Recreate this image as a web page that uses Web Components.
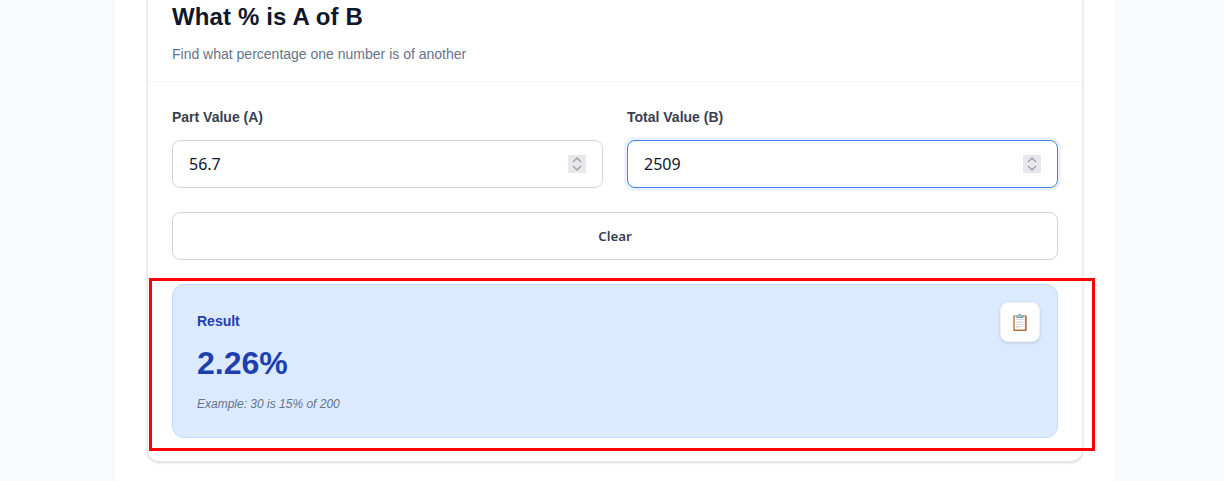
<!DOCTYPE html>
<html lang="en"><head><meta charset="utf-8"><title>What % is A of B</title>
<style>
html,body{margin:0;height:481px;overflow:hidden;background:#f8fafc;font-family:"Liberation Sans",Arial,sans-serif}
</style></head><body>
<x-page>
  <x-card>
    <x-card-header slot="header" heading="What % is A of B" sub="Find what percentage one number is of another"></x-card-header>
    <x-field-row>
      <x-field label="Part Value (A)" value="56.7"></x-field>
      <x-field label="Total Value (B)" value="2509" focused></x-field>
    </x-field-row>
    <x-clear-button>Clear</x-clear-button>
    <x-result value="2.26%" example="Example: 30 is 15% of 200"></x-result>
  </x-card>
  <x-highlight></x-highlight>
</x-page>
<script>
function def(name,html,init){customElements.define(name,class extends HTMLElement{
  constructor(){super();this.attachShadow({mode:'open'}).innerHTML=html;}
  connectedCallback(){if(init)init(this,this.shadowRoot);}
});}
def('x-page',`<style>
:host{display:block;position:relative;width:1000px;height:481px;margin-left:115px;background:#fff;overflow:hidden;padding:0 32px;box-sizing:border-box}
</style><slot></slot>`);
def('x-card',`<style>
:host{display:block;margin-top:-19px;background:#fff;border:1px solid #e2e8f0;border-radius:12px;box-shadow:0 1px 3px rgba(0,0,0,.1),0 1px 2px rgba(0,0,0,.06)}
.body{display:flex;flex-direction:column;gap:24px;padding:25px 24px 23px}
</style><slot name="header"></slot><div class="body"><slot></slot></div>`);
def('x-card-header',`<style>
:host{display:block;padding:19px 24px 16px;border-bottom:1px solid #f1f5f9}
h2{margin:0;font:700 24px/32px "Liberation Sans",Arial,sans-serif;color:#0f172a;letter-spacing:.13px}
p{margin:11px 0 0;font:400 14px/21px "Liberation Sans",Arial,sans-serif;color:#64748b}
</style><h2></h2><p></p>`,(e,s)=>{s.querySelector('h2').textContent=e.getAttribute('heading');s.querySelector('p').textContent=e.getAttribute('sub');});
def('x-field-row',`<style>
:host{display:grid;grid-template-columns:1fr 1fr;gap:24px}
</style><slot></slot>`);
def('x-field',`<style>
:host{display:flex;flex-direction:column;gap:12px}
label{font:600 14px/21px "Liberation Sans",Arial,sans-serif;color:#374151}
.wrap{position:relative;height:48px}
input{box-sizing:border-box;display:block;width:100%;height:48px;padding:12px 16px;border:1px solid #d1d5db;border-radius:8px;background:#fff;font:400 16px/24px "Noto Sans",sans-serif;color:#0f172a;outline:none;-moz-appearance:textfield}
input::-webkit-inner-spin-button,input::-webkit-outer-spin-button{-webkit-appearance:none;margin:0}
:host([focused]) input{border-color:#3b82f6;box-shadow:0 0 0 3px rgba(59,130,246,.1)}
svg{position:absolute;right:17px;top:15px;width:18px;height:18px;background:#e8e8ec;pointer-events:none}
</style><label for="i"></label><div class="wrap"><input id="i" type="number">
<svg viewBox="0 0 18 18" fill="none" stroke="#a09da9" stroke-width="1.3"><path d="M5 7 9 3l4 4M5 11l4 4 4-4"/></svg></div>`,(e,s)=>{s.querySelector('label').textContent=e.getAttribute('label');s.querySelector('input').value=e.getAttribute('value');});
def('x-clear-button',`<style>
:host{display:block}
button{display:block;box-sizing:border-box;width:100%;height:48px;border:1px solid #d1d5db;border-radius:8px;background:#fff;font:600 13.333px/21px "Noto Sans",sans-serif;color:#374151;padding:0}
</style><button><slot></slot></button>`);
def('x-result',`<style>
:host{display:block;position:relative;box-sizing:border-box;height:154px;padding:26px 24px 0;background:#dbeafe;border:1px solid #bfdbfe;border-radius:12px}
.l{font:600 14px/21px "Liberation Sans",Arial,sans-serif;color:#1e40af;margin-bottom:7px}
.v{font:700 32px/48px "Liberation Sans",Arial,sans-serif;color:#1e40af;margin-bottom:8px}
.e{font:italic 400 12px/18px "Liberation Sans",Arial,sans-serif;color:#64748b}
button{position:absolute;top:17px;right:17px;box-sizing:border-box;width:40px;height:40px;padding:1px 0 0;display:flex;align-items:center;justify-content:center;background:#fff;border:1px solid #eef0f4;border-radius:8px;box-shadow:0 1px 3px rgba(0,0,0,.15);font:400 16px/24px "Noto Color Emoji","Noto Sans",sans-serif;color:#000}
</style><div class="l">Result</div><div class="v"></div><div class="e"></div>
<button aria-label="Copy">📋</button>`,(e,s)=>{s.querySelector('.v').textContent=e.getAttribute('value');s.querySelector('.e').textContent=e.getAttribute('example');});
def('x-highlight',`<style>
:host{position:absolute;left:34px;top:278px;width:946px;height:173px;box-sizing:border-box;border:3px solid #ff0000;pointer-events:none}
</style>`);
</script>
</body></html>
